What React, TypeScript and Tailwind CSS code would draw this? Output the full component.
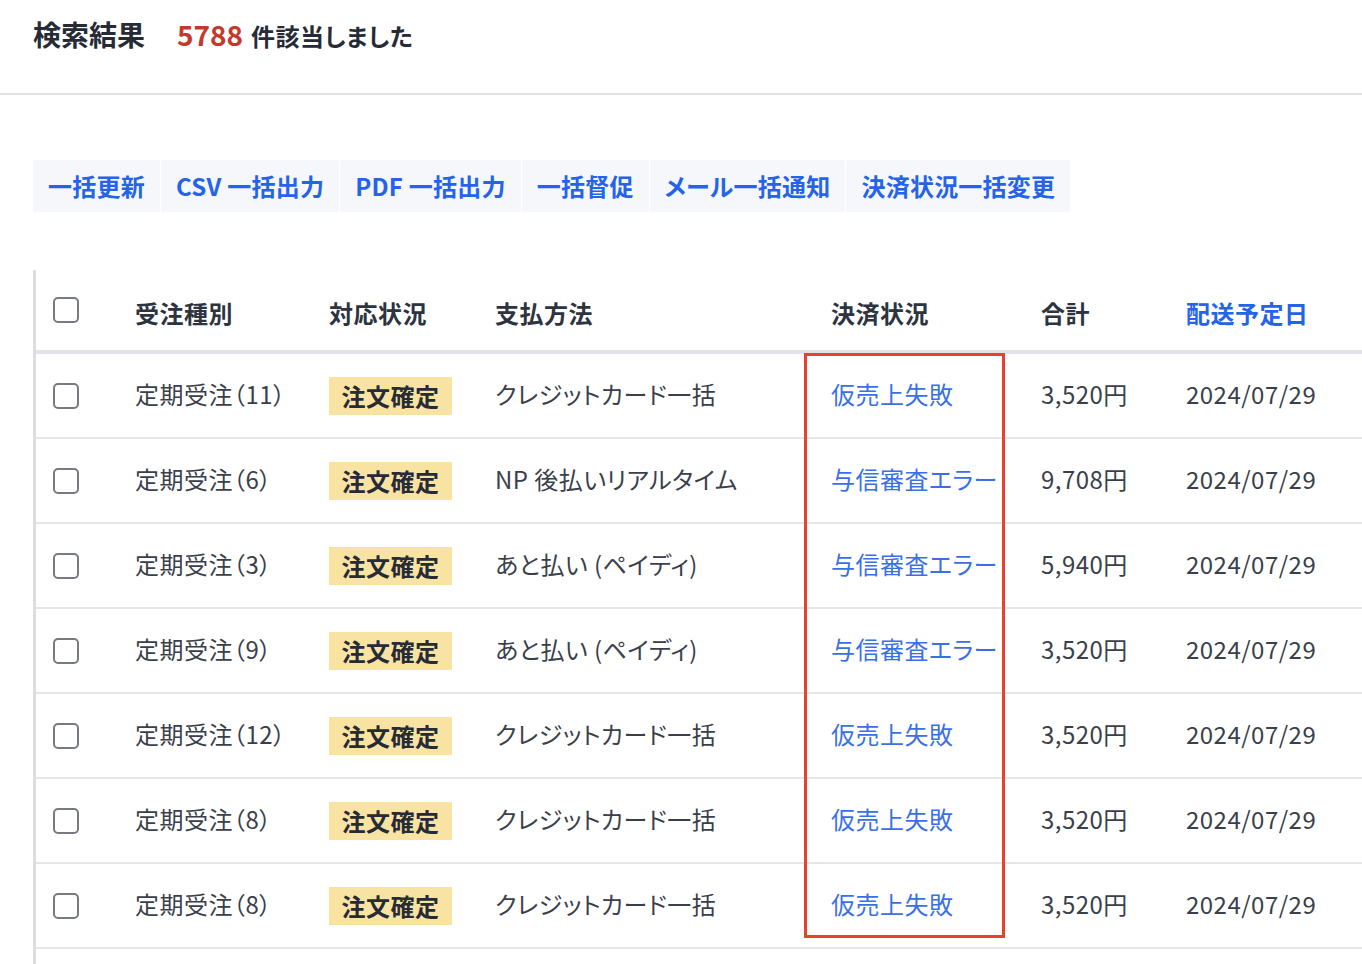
import React from "react";

interface Order {
  type: string;
  payment: string;
  settlement: string;
  total: string;
  date: string;
}

const orders: Order[] = [
  { type: "定期受注（11）", payment: "クレジットカード一括", settlement: "仮売上失敗", total: "3,520円", date: "2024/07/29" },
  { type: "定期受注（6）", payment: "NP 後払いリアルタイム", settlement: "与信審査エラー", total: "9,708円", date: "2024/07/29" },
  { type: "定期受注（3）", payment: "あと払い (ペイディ)", settlement: "与信審査エラー", total: "5,940円", date: "2024/07/29" },
  { type: "定期受注（9）", payment: "あと払い (ペイディ)", settlement: "与信審査エラー", total: "3,520円", date: "2024/07/29" },
  { type: "定期受注（12）", payment: "クレジットカード一括", settlement: "仮売上失敗", total: "3,520円", date: "2024/07/29" },
  { type: "定期受注（8）", payment: "クレジットカード一括", settlement: "仮売上失敗", total: "3,520円", date: "2024/07/29" },
  { type: "定期受注（8）", payment: "クレジットカード一括", settlement: "仮売上失敗", total: "3,520円", date: "2024/07/29" },
];

const actions = ["一括更新", "CSV 一括出力", "PDF 一括出力", "一括督促", "メール一括通知", "決済状況一括変更"];

const rowGrid = "grid grid-cols-[99px_194px_166px_336px_210px_145px_1fr] items-center";

const Checkbox = () => (
  <div className="w-[26px] h-[26px] rounded-[5px] border-2 border-[#777a80] bg-white ml-[17px]" />
);

const App = () => {
  return (
    <div
      className="relative w-[1362px] h-[964px] overflow-hidden bg-white text-[#3a3f4b] tracking-[0.03em] [font-feature-settings:'palt']"
      style={{ fontFamily: '"Noto Sans CJK JP", "Noto Sans", sans-serif' }}
    >
      {/* header */}
      <div className="h-[95px] border-b-2 border-[#e3e3e3] flex items-start pl-[33px] pt-[14px]">
        <h1 className="text-[28px] font-bold text-[#262b36] leading-[40px] tracking-normal">検索結果</h1>
        <p className="ml-[32px] flex items-baseline leading-[40px]">
          <span className="text-[28px] font-bold text-[#c23a2c] tracking-normal">5788</span>
          <span className="ml-[8px] text-[24px] font-bold text-[#262b36]">件該当しました</span>
        </p>
      </div>

      {/* bulk actions */}
      <div className="flex gap-[1px] pl-[33px] mt-[65px]">
        {actions.map((a) => (
          <button
            key={a}
            className="h-[52px] px-[15px] bg-[#f5f7fa] rounded-[2px] text-[24px] font-bold text-[#2563eb] whitespace-nowrap tracking-[0.01em]"
          >
            {a}
          </button>
        ))}
      </div>

      {/* table */}
      <div className="relative ml-[33px] mt-[58px] border-l-[3px] border-[#dedede] w-[1400px]">
        <div className={`${rowGrid} h-[84px] border-b-[4px] border-[#e2e3e8] text-[24px] font-bold text-[#2e3340]`}>
          <div><Checkbox /></div>
          <div className="mt-[6px]">受注種別</div>
          <div className="mt-[6px]">対応状況</div>
          <div className="mt-[6px]">支払方法</div>
          <div className="mt-[6px]">決済状況</div>
          <div className="mt-[6px]">合計</div>
          <div className="mt-[6px] text-[#2563eb]">配送予定日</div>
        </div>
        {orders.map((o, i) => (
          <div key={i} className={`${rowGrid} h-[85px] border-b-2 border-[#e5e6ea] text-[24px]`}>
            <div><Checkbox /></div>
            <div className="-mt-[4px]">{o.type}</div>
            <div>
              <span className="inline-flex items-center justify-center w-[123px] h-[38px] bg-[#f9e3a3] font-bold text-[#262b36]">
                注文確定
              </span>
            </div>
            <div className="-mt-[4px]">{o.payment}</div>
            <div className="-mt-[4px] text-[#3b6fe6]">{o.settlement}</div>
            <div className="-mt-[4px]">{o.total}</div>
            <div className="-mt-[4px]">{o.date}</div>
          </div>
        ))}
        <div className="h-[40px]" />

        {/* highlight */}
        <div className="absolute left-[768px] top-[83px] w-[201px] h-[585px] border-[3px] border-[#e5432d]" />
      </div>
    </div>
  );
};

export default App;
